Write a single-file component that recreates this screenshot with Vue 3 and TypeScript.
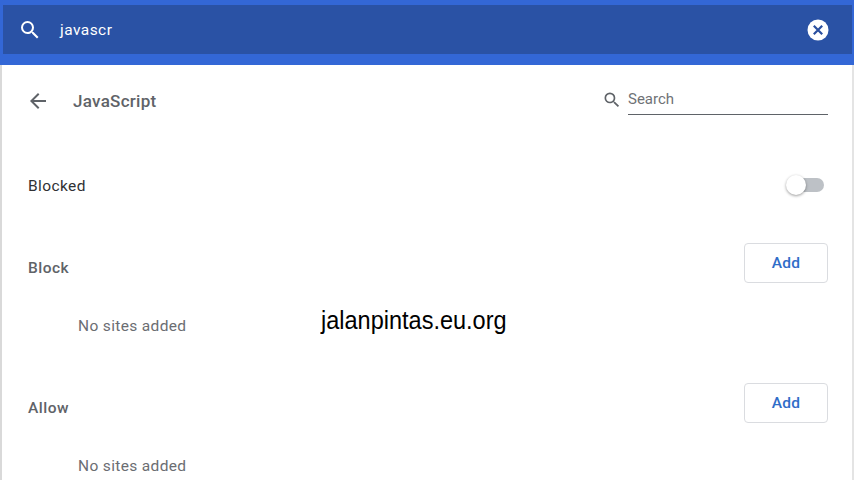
<script setup lang="ts">
interface Section { title: string }
const sections: Section[] = [{ title: 'Block' }, { title: 'Allow' }]
</script>

<template>
  <div class="page">
    <header class="top">
      <div class="bar">
        <svg class="search-icon" viewBox="0 0 24 24" width="24" height="24"><path fill="#fff" d="M15.5 14h-.79l-.28-.27A6.47 6.47 0 0 0 16 9.5 6.5 6.5 0 1 0 9.5 16c1.61 0 3.09-.59 4.23-1.57l.27.28v.79l5 4.99L20.49 19l-4.99-5zm-6 0C7.01 14 5 11.99 5 9.5S7.01 5 9.5 5 14 7.01 14 9.5 11.99 14 9.5 14z"/></svg>
        <span class="query">javascr</span>
        <svg class="clear" viewBox="0 0 24 24" width="24" height="24"><circle cx="12" cy="12" r="10.5" fill="#fff"/><path fill="none" stroke="#2a4f9f" stroke-width="2.2" d="M7.8 7.8l8.4 8.4M16.2 7.8l-8.4 8.4"/></svg>
      </div>
    </header>
    <main class="card">
      <div class="title-row">
        <svg class="back" viewBox="0 0 24 24" width="24" height="24"><path fill="#5f6368" d="M20 11H7.83l5.59-5.59L12 4l-8 8 8 8 1.41-1.41L7.83 13H20v-2z"/></svg>
        <h1>JavaScript</h1>
        <div class="sub-search">
          <svg viewBox="0 0 24 24" width="20" height="20"><path fill="#5f6368" d="M15.5 14h-.79l-.28-.27A6.47 6.47 0 0 0 16 9.5 6.5 6.5 0 1 0 9.5 16c1.61 0 3.09-.59 4.23-1.57l.27.28v.79l5 4.99L20.49 19l-4.99-5zm-6 0C7.01 14 5 11.99 5 9.5S7.01 5 9.5 5 14 7.01 14 9.5 11.99 14 9.5 14z"/></svg>
          <span class="sub-input">Search</span>
        </div>
      </div>
      <div class="toggle-row">
        <span class="toggle-label">Blocked</span>
        <span class="toggle"><span class="knob"></span></span>
      </div>
      <section v-for="s in sections" :key="s.title" class="sec">
        <div class="sec-head">
          <h2>{{ s.title }}</h2>
          <button class="add">Add</button>
        </div>
        <p class="empty">No sites added</p>
      </section>
    </main>
    <div class="mark">jalanpintas.eu.org</div>
  </div>
</template>

<style>
html, body { margin: 0; background: #fff; overflow: hidden; }
</style>

<style scoped>
.page {
  position: relative;
  width: 854px;
  height: 480px;
  overflow: hidden;
  font-family: Roboto, "Liberation Sans", sans-serif;
  background: #fff;
}
.top {
  background: #3367d6;
  padding: 5px 2px 11px 3px;
}
.bar {
  height: 49px;
  background: #2a52a5;
  display: flex;
  align-items: center;
  padding: 0 22px 0 15px;
  color: #fff;
}
.search-icon { flex: none; }
.query {
  margin-left: 18px;
  font-size: 15.5px;
  font-weight: 400;
  letter-spacing: 0.45px;
  flex: 1;
}
.clear { flex: none; }
.card {
  border-left: 2px solid #d9d9d9;
  border-right: 2px solid #e4e4e4;
  height: 415px;
  box-sizing: border-box;
  padding: 0 24px 0 26px;
}
.title-row {
  height: 71px;
  display: flex;
  align-items: center;
}
.back { margin-left: -2px; flex: none; }
h1 {
  margin: 0 0 0 23px;
  font-size: 17px;
  font-weight: 500;
  letter-spacing: 0.28px;
  color: #5f6368;
  flex: 1;
}
.sub-search {
  display: flex;
  align-items: center;
  gap: 6px;
  margin-top: -2px;
}
.sub-input {
  width: 200px;
  height: 31px;
  line-height: 30px;
  box-sizing: border-box;
  border-bottom: 1px solid #5f6368;
  font-size: 15px;
  color: #6f7276;
}
.toggle-row {
  margin-top: 34px;
  height: 30px;
  display: flex;
  align-items: center;
  justify-content: space-between;
  font-size: 15.5px;
  letter-spacing: 0.4px;
  color: #303134;
}
.toggle-label { padding-top: 2px; }
.toggle {
  position: relative;
  width: 34px;
  height: 14px;
  margin-right: 4px;
  border-radius: 7px;
  background: #bdc1c6;
}
.knob {
  position: absolute;
  left: -4px;
  top: -3px;
  width: 20px;
  height: 20px;
  border-radius: 50%;
  background: #fff;
  box-shadow: 0 1px 3px rgba(0, 0, 0, 0.4);
}
.sec { height: 140px; }
.toggle-row + .sec { margin-top: 43px; }
.sec-head {
  display: flex;
  justify-content: space-between;
  align-items: flex-start;
  height: 40px;
}
h2 {
  margin: 15px 0 0;
  font-size: 15.5px;
  line-height: 20px;
  font-weight: 500;
  letter-spacing: 0.5px;
  color: #5f6368;
}
.add {
  width: 84px;
  height: 40px;
  box-sizing: border-box;
  background: #fff;
  border: 1px solid #dadce0;
  border-radius: 4px;
  font: 500 15.5px Roboto, "Liberation Sans", sans-serif;
  letter-spacing: 0.3px;
  color: #2f6dc8;
  padding: 0;
}
.empty {
  margin: 33px 0 0 50px;
  font-size: 15.5px;
  line-height: 20px;
  letter-spacing: 0.35px;
  color: #6b6d72;
}
.mark {
  position: absolute;
  left: 321px;
  top: 304px;
  font-family: "Liberation Sans", Arial, sans-serif;
  font-size: 26px;
  line-height: 32px;
  color: #000;
  transform-origin: left center;
  transform: scaleX(0.904);
  white-space: nowrap;
}
</style>
